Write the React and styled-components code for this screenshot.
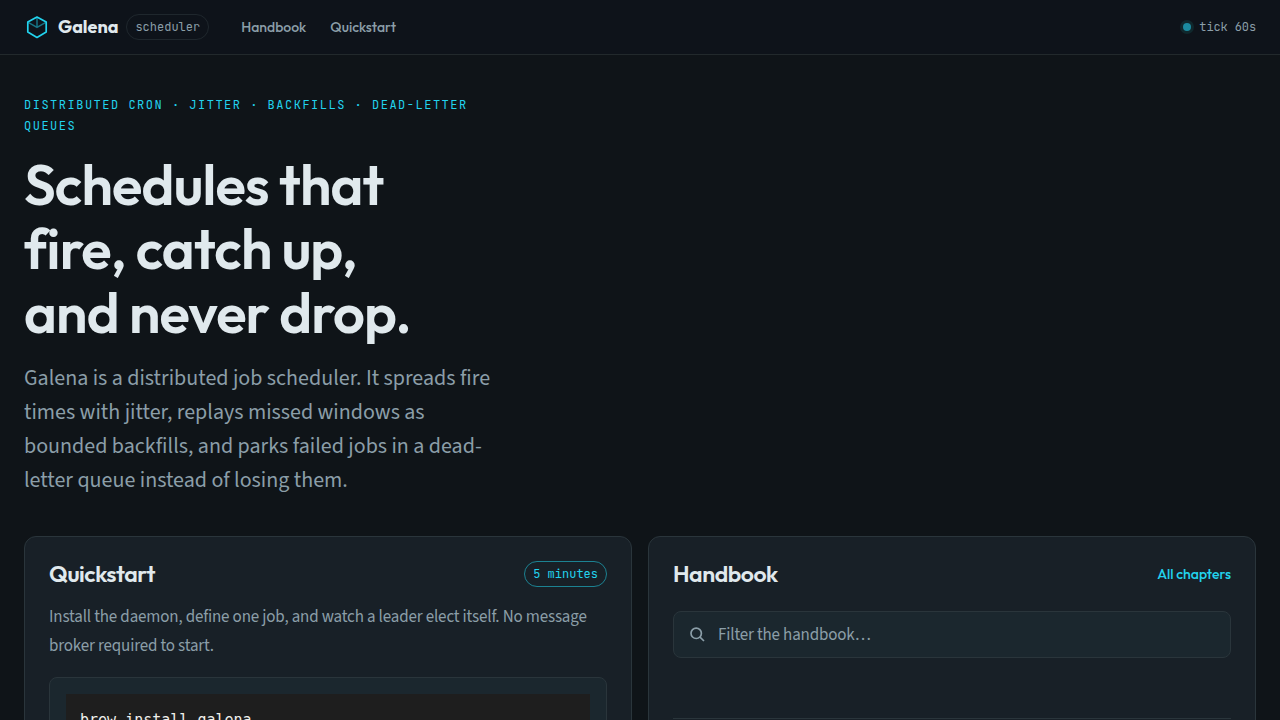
import React, { useState } from 'react'
import styled, { createGlobalStyle, ThemeProvider } from 'styled-components'

const theme = {
    background: '#0f1418',
    header: '#0e131a',
    card: '#182027',
    inset: '#1b272e',
    code: '#1e1e1e',
    line: '#2a353b',
    color: '#e0e9ed',
    muted: '#8b9ea8',
    accent: '#22d3ee',
    heading: "Outfit, Lato, sans-serif",
    text: "'Source Sans 3', 'Noto Sans', sans-serif",
    mono: "'JetBrains Mono', 'DejaVu Sans Mono', monospace",
}

const GlobalStyle = createGlobalStyle`
*{
    box-sizing: border-box;
}
body{
    margin: 0;
    background: ${({theme})=>theme.background};
    color: ${({theme})=>theme.color};
    font-family: ${({theme})=>theme.text};
}
h1, h2, p, pre{
    margin: 0;
}
a{
    text-decoration: none;
}
`

const Header = styled.header`
display: flex;
align-items: center;
height: 55px;
padding: 0 24px;
gap: 32px;
background: ${({theme})=>theme.header};
border-bottom: 1px solid #22292c;
`

const Brand = styled.a`
display: flex;
align-items: center;
gap: 8px;
color: ${({theme})=>theme.color};
font: 700 18px/24px ${({theme})=>theme.heading};
svg{
    flex: none;
}
`

const Pill = styled.span`
padding: 2px 8px;
border: 1px solid ${({$accent})=>$accent ? '#1c8292' : '#1f272d'};
border-radius: 13px;
color: ${({theme,$accent})=>$accent ? theme.accent : theme.muted};
font: 400 12px/20px ${({theme})=>theme.mono};
white-space: nowrap;
`

const Nav = styled.nav`
display: flex;
gap: 24px;
a{
    color: ${({theme})=>theme.muted};
    font: 500 14px/24px ${({theme})=>theme.heading};
}
`

const Status = styled.div`
display: flex;
align-items: center;
gap: 8px;
margin-left: auto;
color: ${({theme})=>theme.muted};
font: 400 12px/20px ${({theme})=>theme.mono};
letter-spacing: -0.01em;
`

const Dot = styled.span`
width: 8px;
height: 8px;
border-radius: 50%;
background: #1b8ba0;
box-shadow: 0 0 0 3px #10282d;
`

const Hero = styled.section`
max-width: 528px;
padding: 40px 24px 39px;
`

const Eyebrow = styled.p`
max-width: 472px;
color: ${({theme})=>theme.accent};
font: 400 12px/21px ${({theme})=>theme.mono};
letter-spacing: 0.125em;
text-transform: uppercase;
`

const Title = styled.h1`
max-width: 432px;
margin-top: 16px;
font: 600 56px/64px ${({theme})=>theme.heading};
letter-spacing: -0.015em;
`

const Lead = styled.p`
max-width: 476px;
margin-top: 16px;
color: ${({theme})=>theme.muted};
font-size: 22px;
line-height: 34px;
`

const Grid = styled.main`
display: grid;
grid-template-columns: 1fr 1fr;
gap: 16px;
padding: 0 24px 24px;
@media screen and (max-width : 768px){
    grid-template-columns: 1fr;
}
`

const Card = styled.section`
padding: 24px;
background: ${({theme})=>theme.card};
border: 1px solid ${({theme})=>theme.line};
border-radius: 12px;
`

const CardHead = styled.div`
display: flex;
justify-content: space-between;
align-items: center;
h2{
    font: 600 23px/26px ${({theme})=>theme.heading};
    letter-spacing: -0.02em;
}
a{
    color: ${({theme})=>theme.accent};
    font: 500 14px/20px ${({theme})=>theme.heading};
}
`

const CardText = styled.p`
margin-top: 16px;
color: ${({theme})=>theme.muted};
font-size: 17px;
line-height: 29px;
letter-spacing: -0.01em;
`

const CodeBox = styled.div`
margin-top: 16px;
padding: 16px;
background: ${({theme})=>theme.inset};
border: 1px solid ${({theme})=>theme.line};
border-radius: 8px;
pre{
    padding: 14px;
    background: ${({theme})=>theme.code};
    color: #f0f0ec;
    font: 400 15px/24px ${({theme})=>theme.mono};
}
`

const Search = styled.label`
display: flex;
align-items: center;
gap: 12px;
height: 47px;
margin-top: 24px;
padding: 0 15px;
background: ${({theme})=>theme.inset};
border: 1px solid ${({theme})=>theme.line};
border-radius: 8px;
color: ${({theme})=>theme.muted};
svg{
    flex: none;
}
input{
    flex: 1;
    min-width: 0;
    padding: 0;
    border: none;
    outline: none;
    background: transparent;
    color: ${({theme})=>theme.color};
    font: 400 17px/24px ${({theme})=>theme.text};
    letter-spacing: -0.01em;
}
input::placeholder{
    color: ${({theme})=>theme.muted};
    opacity: 1;
}
`

const Results = styled.div`
height: 80px;
margin-top: 60px;
border-top: 1px solid ${({theme})=>theme.line};
`

const Logo = () => (
    <svg width="26" height="26" viewBox="0 0 26 26" fill="none" stroke="#22d3ee" aria-hidden="true">
        <path d="M13 3 22.2 8.1v10L13 23.4 3.8 18.1v-10Z" strokeWidth="1.7" strokeLinejoin="round" />
        <path d="M4.2 8.4 13 13.4l8.8-5M13 3.5v9.9" strokeWidth="1.5" opacity="0.5" />
    </svg>
)

const SearchIcon = () => (
    <svg width="17" height="17" viewBox="0 0 17 17" fill="none" stroke="currentColor" strokeWidth="1.7" aria-hidden="true">
        <circle cx="7.2" cy="7.3" r="5.2" />
        <path d="m11 11.1 4 3.9" />
    </svg>
)

const App = () => {
    const [filter, setFilter] = useState('')

  return (
    <ThemeProvider theme={theme}>
      <GlobalStyle />
      <Header>
        <Brand href="#">
            <Logo />
            <span>Galena</span>
            <Pill>scheduler</Pill>
        </Brand>
        <Nav>
            <a href="#handbook">Handbook</a>
            <a href="#quickstart">Quickstart</a>
        </Nav>
        <Status><Dot />tick 60s</Status>
      </Header>
      <Hero>
        <Eyebrow>Distributed cron · Jitter · Backfills · Dead-letter queues</Eyebrow>
        <Title>Schedules that fire, catch up, and never drop.</Title>
        <Lead>
            Galena is a distributed job scheduler. It spreads fire times with jitter, replays missed windows as
            bounded backfills, and parks failed jobs in a dead-letter queue instead of losing them.
        </Lead>
      </Hero>
      <Grid>
        <Card id="quickstart">
            <CardHead>
                <h2>Quickstart</h2>
                <Pill $accent>5 minutes</Pill>
            </CardHead>
            <CardText>
                Install the daemon, define one job, and watch a leader elect itself. No message broker required to start.
            </CardText>
            <CodeBox>
                <pre><code>brew install galena</code></pre>
            </CodeBox>
        </Card>
        <Card id="handbook">
            <CardHead>
                <h2>Handbook</h2>
                <a href="#chapters">All chapters</a>
            </CardHead>
            <Search>
                <SearchIcon />
                <input
                    type="search"
                    aria-label="Filter the handbook"
                    placeholder="Filter the handbook…"
                    value={filter}
                    onChange={(e)=>setFilter(e.target.value)}
                />
            </Search>
            <Results />
        </Card>
      </Grid>
    </ThemeProvider>
  )
}

export default App
